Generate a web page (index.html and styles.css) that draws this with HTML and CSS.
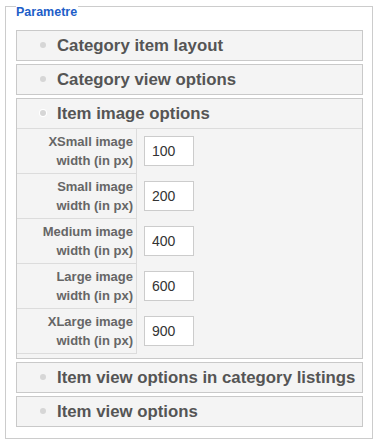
FILE: index.html
```html
<!DOCTYPE html>
<html lang="en">
<head>
  <meta charset="UTF-8" />
  <meta name="viewport" content="width=device-width, initial-scale=1.0"/>
  <title>Parametre</title>
  <link rel="stylesheet" href="styles.css">
</head>
<body>
  <fieldset class="params">
    <legend><span>Parametre</span></legend>

    <div class="panel">
      <h3 class="panel-title"><span class="dot"></span>Category item layout</h3>
    </div>
    <div class="panel">
      <h3 class="panel-title"><span class="dot"></span>Category view options</h3>
    </div>

    <!-- open panel -->
    <div class="panel open">
      <h3 class="panel-title"><span class="dot"></span>Item image options</h3>
      <div class="panel-body">
        <div class="row">
          <label class="key" for="img_xs">XSmall image<br>width (in px)</label>
          <div class="val"><input type="text" id="img_xs" value="100" /></div>
        </div>
        <div class="row">
          <label class="key" for="img_s">Small image<br>width (in px)</label>
          <div class="val"><input type="text" id="img_s" value="200" /></div>
        </div>
        <div class="row">
          <label class="key" for="img_m">Medium image<br>width (in px)</label>
          <div class="val"><input type="text" id="img_m" value="400" /></div>
        </div>
        <div class="row">
          <label class="key" for="img_l">Large image<br>width (in px)</label>
          <div class="val"><input type="text" id="img_l" value="600" /></div>
        </div>
        <div class="row">
          <label class="key" for="img_xl">XLarge image<br>width (in px)</label>
          <div class="val"><input type="text" id="img_xl" value="900" /></div>
        </div>
      </div>
    </div>

    <div class="panel">
      <h3 class="panel-title"><span class="dot"></span>Item view options in category listings</h3>
    </div>
    <div class="panel">
      <h3 class="panel-title"><span class="dot"></span>Item view options</h3>
    </div>
  </fieldset>
</body>
</html>
```

FILE: styles.css
```css
body {
  margin: 0;
  background: #fff;
  font-family: "Liberation Sans", Arial, sans-serif;
}

.params {
  margin: 0 4px 0 5px;
  padding: 17px 9px 11px 10px;
  min-width: 0;
  border: 1px solid #ccc;
}

.params legend {
  height: 7px;
  padding: 6px 1px 0 0;
  font-size: 12.5px;
  line-height: 13px;
  font-weight: bold;
  color: #1d5ec8;
}

.panel {
  margin-bottom: 3px;
  background: #f4f4f4;
  border: 1px solid #c9c9c9;
}

.panel:last-child {
  margin-bottom: 0;
}

.panel-title {
  margin: 0;
  padding-left: 23px;
  height: 29px;
  font-size: 16.8px;
  line-height: 29px;
  font-weight: bold;
  color: #555;
  white-space: nowrap;
}

.dot {
  display: inline-block;
  width: 6px;
  height: 6px;
  margin-right: 11px;
  vertical-align: 3px;
  border-radius: 50%;
  background: #d6d6d6;
}

.open .panel-title {
  border-bottom: 1px solid #dcdcdc;
}

.open .dot {
  box-shadow: 0 0 0 1px #fff;
}

.panel-body {
  padding-bottom: 4px;
}

.row {
  display: flex;
  align-items: center;
}

.key {
  width: 116px;
  padding: 3px 3px 3px 0;
  text-align: right;
  font-size: 13px;
  line-height: 19px;
  font-weight: bold;
  color: #666;
  border-right: 1px solid #dcdcdc;
  border-bottom: 1px solid #dcdcdc;
}

.val {
  padding-left: 7px;
}

.val input {
  width: 50px;
  height: 30px;
  margin-top: -2px;
  padding: 0 0 0 7px;
  box-sizing: border-box;
  border: 1px solid #ccc;
  font-family: "Liberation Sans", Arial, sans-serif;
  font-size: 14px;
  color: #333;
  background: #fff;
}
```
